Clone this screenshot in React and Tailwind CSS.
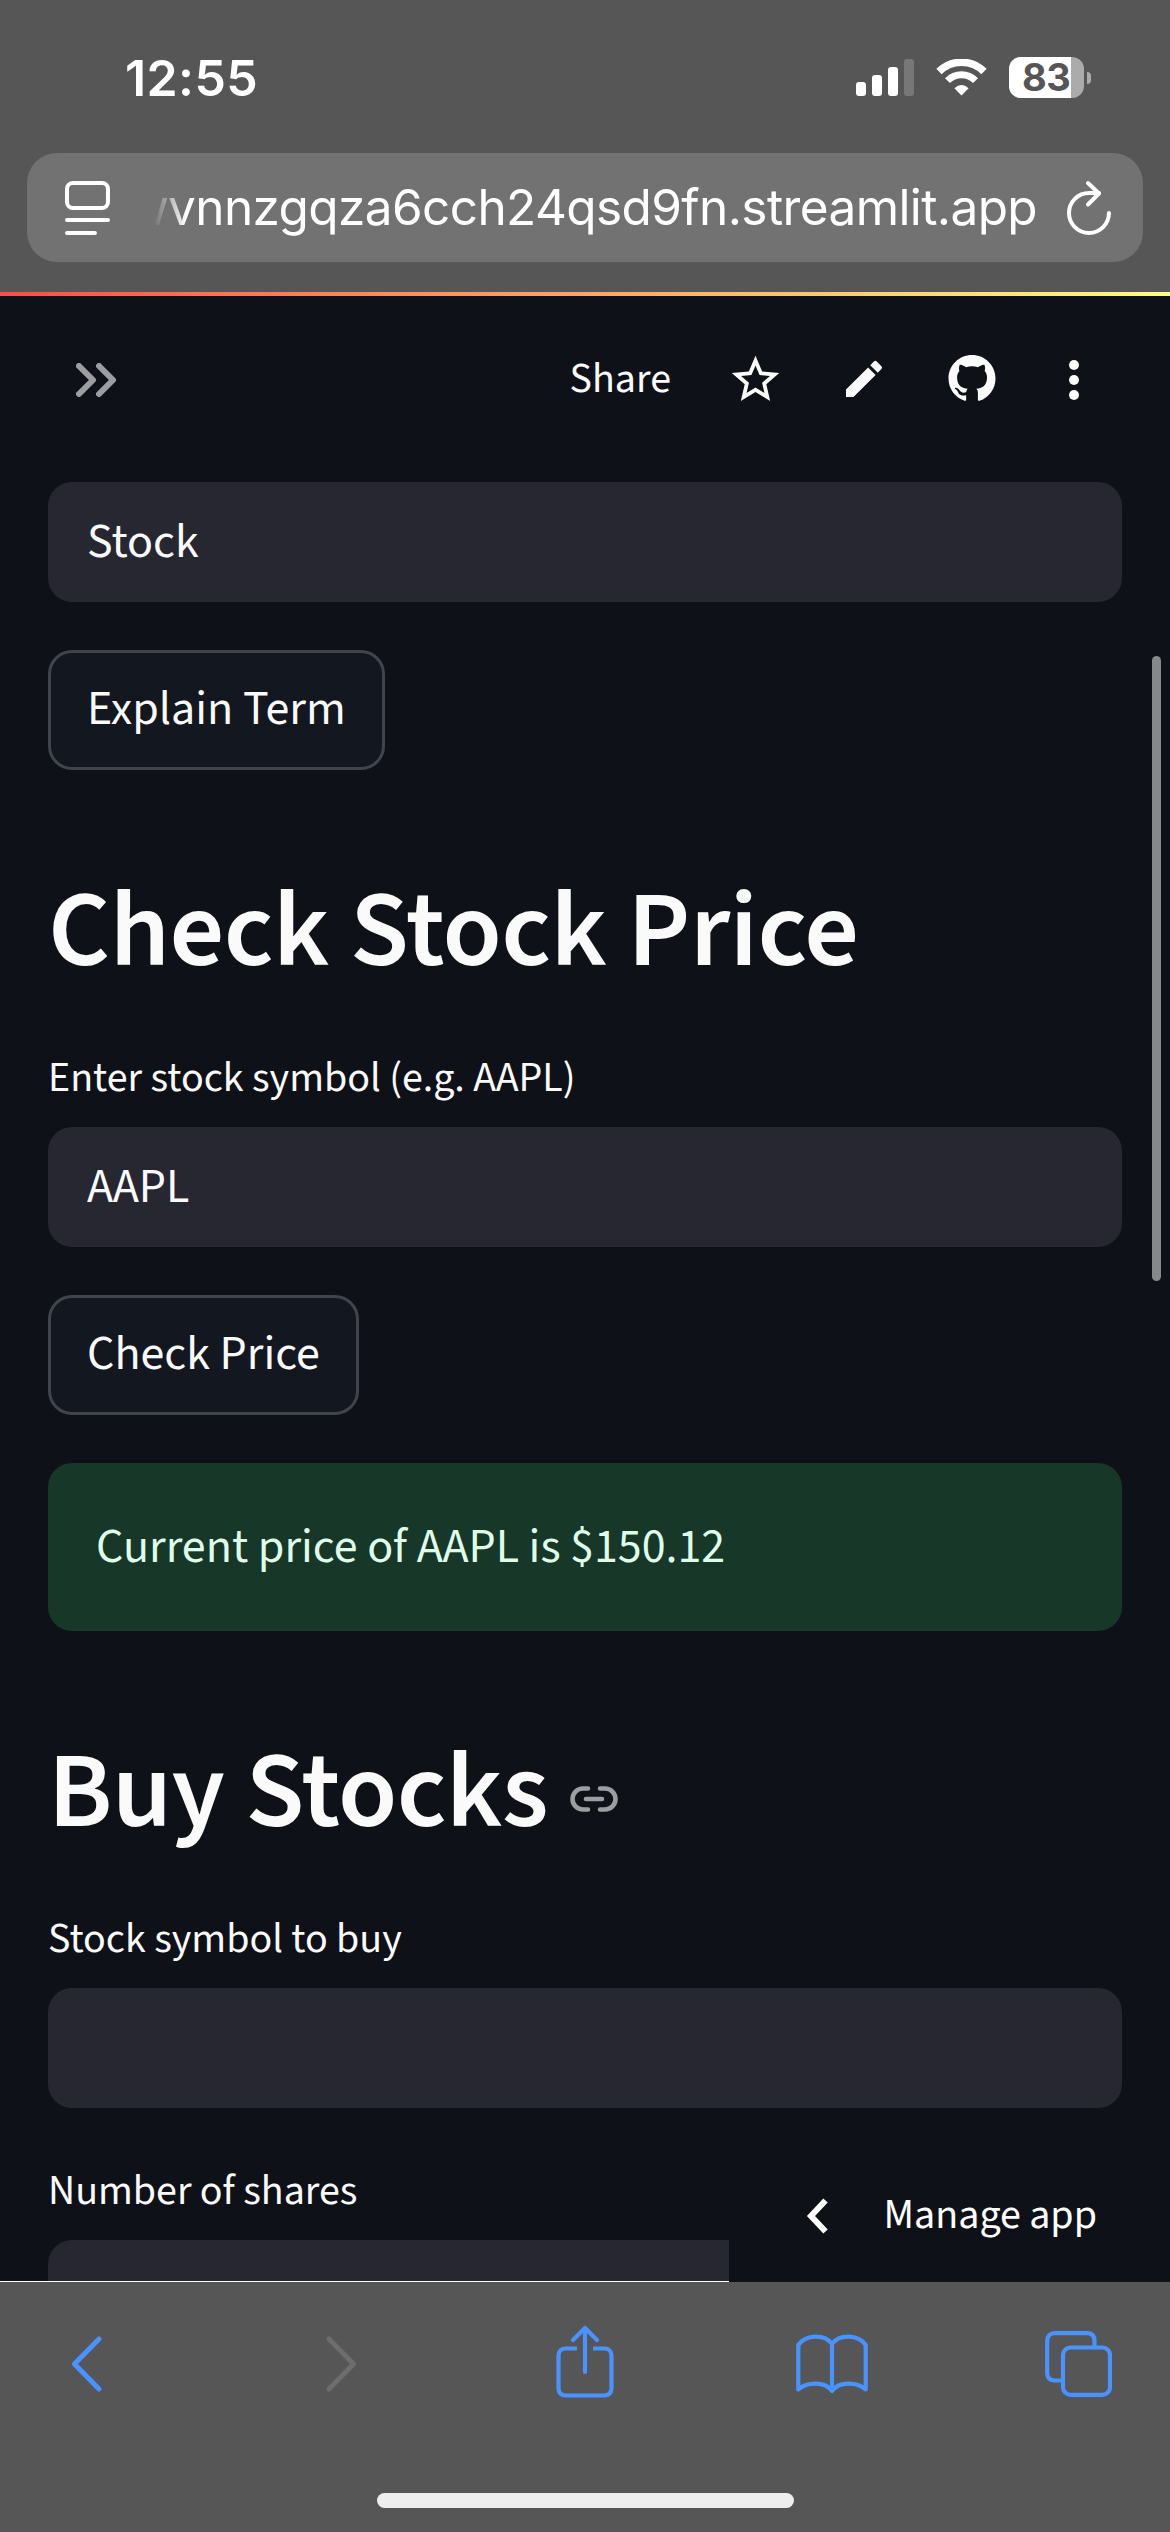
import { useState } from 'react'
import { MdEdit } from 'react-icons/md'

function SignalIcon() {
  return (
    <svg width="58" height="37" viewBox="0 0 58 37" fill="#fff">
      <rect x="0" y="23" width="10" height="14" rx="3" />
      <rect x="16" y="16" width="10" height="21" rx="3" />
      <rect x="32" y="8" width="10" height="29" rx="3" />
      <rect x="48" y="0" width="10" height="37" rx="3" opacity="0.2" />
    </svg>
  )
}

function WifiIcon() {
  return (
    <svg width="51" height="37" viewBox="0 0 51 37" fill="none" stroke="#fff">
      <path d="M3 12.5 A32 32 0 0 1 48 12.5" strokeWidth="7.5" />
      <path d="M11.5 21.6 A19.6 19.6 0 0 1 39.5 21.6" strokeWidth="7" />
      <path d="M18.4 29.3 Q25.5 22.6 32.6 29.3 L25.5 36.6 Z" fill="#fff" stroke="none" />
    </svg>
  )
}

function Battery({ level }) {
  return (
    <div className="flex items-center gap-[3px]">
      <div className="flex h-[41px] w-[75px] rounded-[12px] bg-[#ababab]">
        <div
          className="flex h-full items-center justify-end rounded-l-[12px] bg-white pr-[1px] text-[38px] leading-[41px] font-bold tracking-[-0.5px] text-[#565656]"
          style={{ width: `${level}%` }}
        >
          {level}
        </div>
      </div>
      <div className="h-[12px] w-[4px] rounded-r-full bg-[#ababab]" />
    </div>
  )
}

function StatusBar() {
  return (
    <div className="flex h-[153px] items-start justify-between pt-[57px] pr-[79px] pl-[125px]">
      <span className="text-[50px] leading-[42px] font-semibold tracking-[0.4px]">12:55</span>
      <div className="flex items-center">
        <SignalIcon />
        <div className="mr-[22px] ml-[22px]">
          <WifiIcon />
        </div>
        <Battery level={83} />
      </div>
    </div>
  )
}

function AddressBar() {
  return (
    <div className="mx-[27px] flex h-[109px] items-center rounded-[30px] bg-[#727272] pr-[30px] pl-[38px]">
      <svg width="45" height="54" viewBox="0 0 45 54" fill="none" stroke="#fff" strokeWidth="4" strokeLinecap="round">
        <rect x="2" y="2" width="41" height="25" rx="6" />
        <path d="M2 39H43M2 52H30" />
      </svg>
      <div className="ml-[44px] flex h-full w-[884px] items-center justify-end overflow-hidden [mask-image:linear-gradient(to_right,transparent,black_32px)]">
        <span className="text-[49.5px] leading-none font-normal tracking-[-0.6px] whitespace-nowrap">
          wvnnzgqza6cch24qsd9fn.streamlit.app
        </span>
      </div>
      <svg
        className="ml-[28px]"
        width="48"
        height="56"
        viewBox="0 0 48 56"
        fill="none"
        stroke="#fff"
        strokeWidth="4"
        strokeLinecap="round"
        strokeLinejoin="round"
      >
        <path d="M44 33A20 20 0 1 1 24 13H34" />
        <path d="M23 3L34 13.5L23 24.5" />
      </svg>
    </div>
  )
}

function AppToolbar() {
  return (
    <div className="flex h-[168px] items-center pr-[76px] pl-[76px] text-[#fafafa]">
      <svg width="40" height="34" viewBox="0 0 40 34" fill="none" stroke="#9d9ea1" strokeWidth="6" strokeLinecap="round" strokeLinejoin="round">
        <path d="M3 3L17 17L3 31M23 3L37 17L23 31" />
      </svg>
      <span className="ml-auto pb-[2px] text-[42px] leading-[63px]">Share</span>
      <svg className="mb-[2px] ml-[56px]" width="57" height="57" viewBox="0 0 24 24" fill="#fafafa">
        <path d="M22 9.24l-7.19-.62L12 2 9.19 8.63 2 9.24l5.46 4.73L5.82 21 12 17.27 18.18 21l-1.63-7.03L22 9.24zM12 15.4l-3.76 2.27 1-4.28-3.32-2.88 4.38-.38L12 6.1l1.71 4.04 4.38.38-3.32 2.88 1 4.28L12 15.4z" />
      </svg>
      <MdEdit className="mb-[2px] ml-[56px]" size={48} />
      <svg className="mb-[3px] ml-[60px]" width="48" height="47" viewBox="0 0 16 16" fill="#fafafa">
        <path d="M8 0C3.58 0 0 3.58 0 8c0 3.54 2.29 6.53 5.47 7.59.4.07.55-.17.55-.38 0-.19-.01-.82-.01-1.49-2.01.37-2.53-.49-2.69-.94-.09-.23-.48-.94-.82-1.13-.28-.15-.68-.52-.01-.53.63-.01 1.08.58 1.23.82.72 1.21 1.87.87 2.33.66.07-.52.28-.87.51-1.07-1.78-.2-3.64-.89-3.64-3.95 0-.87.31-1.59.82-2.15-.08-.2-.36-1.02.08-2.12 0 0 .67-.21 2.2.82.64-.18 1.32-.27 2-.27s1.36.09 2 .27c1.53-1.04 2.2-.82 2.2-.82.44 1.1.16 1.92.08 2.12.51.56.82 1.27.82 2.15 0 3.07-1.87 3.75-3.65 3.95.29.25.54.73.54 1.48 0 1.07-.01 1.93-.01 2.2 0 .21.15.46.55.38A8.01 8.01 0 0 0 16 8c0-4.42-3.58-8-8-8z" />
      </svg>
      <svg className="mr-[15px] ml-[73px]" width="10" height="40" viewBox="0 0 10 40" fill="#fafafa">
        <circle cx="5" cy="5" r="5" />
        <circle cx="5" cy="20" r="5" />
        <circle cx="5" cy="35" r="5" />
      </svg>
    </div>
  )
}

function Heading({ children }) {
  return (
    <h1 className="mt-[96px] flex h-[130px] items-center text-[108px] leading-[130px] font-semibold tracking-[-0.5px] text-[#fafafa]">
      {children}
    </h1>
  )
}

function TextInput({ value, onChange, label }) {
  return (
    <input
      className="block h-[120px] w-full rounded-[24px] bg-[#262730] px-[39px] text-[48px] text-[#fafafa] outline-none"
      aria-label={label}
      value={value}
      onChange={(event) => onChange(event.target.value)}
    />
  )
}

function Label({ className, children }) {
  return <p className={`${className} mb-[17px] text-[42px] leading-[63px] text-[#fafafa]`}>{children}</p>
}

function Button({ children }) {
  return (
    <button
      type="button"
      className="mt-[48px] block h-[120px] rounded-[24px] border-[3px] border-[#41444c] bg-[#131720] px-[36px] pb-[2px] text-[48px] leading-[60px] text-[#fafafa]"
    >
      {children}
    </button>
  )
}

function LinkIcon() {
  return (
    <svg
      className="mt-[13px] ml-[22px]"
      width="48"
      height="26"
      viewBox="0 0 48 26"
      fill="none"
      stroke="#9d9ea1"
      strokeWidth="4.6"
      strokeLinecap="round"
    >
      <path d="M18 2.5H13A10.5 10.5 0 0 0 13 23.5H18M30 2.5H35A10.5 10.5 0 0 1 35 23.5H30M16 13H32" />
    </svg>
  )
}

function ManageApp() {
  return (
    <div className="absolute right-0 bottom-0 flex h-[132px] w-[441px] items-center bg-[#0e1117] pr-[73px] pl-[77px]">
      <svg width="22" height="36" viewBox="0 0 22 36" fill="none" stroke="#fff" strokeWidth="6">
        <path d="M19.5 2.5L5 18L19.5 33.5" />
      </svg>
      <span className="ml-auto pb-[2px] text-[42px] leading-[63px] whitespace-nowrap text-white">Manage app</span>
    </div>
  )
}

function BottomBar() {
  return (
    <div className="h-[250px] bg-[#565656]">
      <div className="flex h-[164px] items-center pl-[71px]">
        <svg width="31" height="56" viewBox="0 0 31 56" fill="none" stroke="#4893ff" strokeWidth="5" strokeLinecap="round" strokeLinejoin="round">
          <path d="M28 3L3.5 28L28 53" />
        </svg>
        <svg className="ml-[224px]" width="31" height="56" viewBox="0 0 31 56" fill="none" stroke="#6d6d6d" strokeWidth="5" strokeLinecap="round" strokeLinejoin="round">
          <path d="M3 3L27.5 28L3 53" />
        </svg>
        <svg className="mb-[4px] ml-[199px]" width="58" height="74" viewBox="0 0 58 74" fill="none" stroke="#4893ff" strokeWidth="4.2" strokeLinejoin="round">
          <path d="M21 23.5H10Q2.5 23.5 2.5 31V63Q2.5 70.5 10 70.5H48Q55.5 70.5 55.5 63V31Q55.5 23.5 48 23.5H37" />
          <path d="M29 47V3M17 15L29 3L41 15" strokeLinecap="round" />
        </svg>
        <svg className="ml-[182px]" width="72" height="60" viewBox="0 0 72 60" fill="none" stroke="#4893ff" strokeWidth="4.2" strokeLinecap="round" strokeLinejoin="round">
          <path d="M36 57V10M2.3 55.5V11C10 0 29 0 36 10C43 0 62 0 69.7 11V55.5C61 48 43 47 36 57C29 47 11 48 2.3 55.5Z" />
        </svg>
        <svg className="ml-[177px]" width="67" height="66" viewBox="0 0 67 66" fill="none" stroke="#4893ff" strokeWidth="4.2">
          <path d="M16 49.5H10Q2.2 49.5 2.2 42V10Q2.2 2.2 10 2.2H42Q49.5 2.2 49.5 10V15" />
          <rect x="18" y="16.5" width="47" height="47.3" rx="7.5" />
        </svg>
      </div>
      <div className="mx-auto mt-[47px] h-[15px] w-[417px] rounded-full bg-[#eee]" />
    </div>
  )
}

export default function App() {
  const [term, setTerm] = useState('Stock')
  const [symbol, setSymbol] = useState('AAPL')
  const [buySymbol, setBuySymbol] = useState('')
  const [shares, setShares] = useState('')

  return (
    <div className="flex h-[2532px] w-[1170px] flex-col overflow-hidden bg-[#0e1117]">
      <header className="h-[292px] bg-[#565656] font-['Inter',sans-serif] text-white">
        <StatusBar />
        <AddressBar />
      </header>
      <div className="h-[4px] bg-linear-to-r from-[#ff4b4b] via-[#ffa563] to-[#fffd80]" />

      <main className="relative h-[1986px] overflow-hidden font-['Source_Sans_3','Noto_Sans_CJK_SC',sans-serif]">
        <AppToolbar />
        <div className="px-[48px] pt-[18px]">
          <TextInput label="Term" value={term} onChange={setTerm} />
          <Button>Explain Term</Button>

          <Heading>Check Stock Price</Heading>
          <Label className="mt-[51px]">Enter stock symbol (e.g. AAPL)</Label>
          <TextInput label="Stock symbol" value={symbol} onChange={setSymbol} />
          <Button>Check Price</Button>
          <div className="mt-[48px] flex h-[168px] items-center rounded-[24px] bg-[#173728] px-[48px] text-[48px] text-[#dffde9]">
            Current price of AAPL is $150.12
          </div>

          <Heading>
            Buy Stocks
            <LinkIcon />
          </Heading>
          <Label className="mt-[51px]">Stock symbol to buy</Label>
          <TextInput label="Symbol to buy" value={buySymbol} onChange={setBuySymbol} />
          <Label className="mt-[52px]">Number of shares</Label>
          <TextInput label="Shares" value={shares} onChange={setShares} />
        </div>

        {/* scroll indicator */}
        <div className="absolute top-[360px] right-[9px] h-[625px] w-[9px] rounded-full bg-[#87888b]" />
        <div className="absolute bottom-0 left-0 h-px w-full bg-white" />
        <ManageApp />
      </main>

      <BottomBar />
    </div>
  )
}
